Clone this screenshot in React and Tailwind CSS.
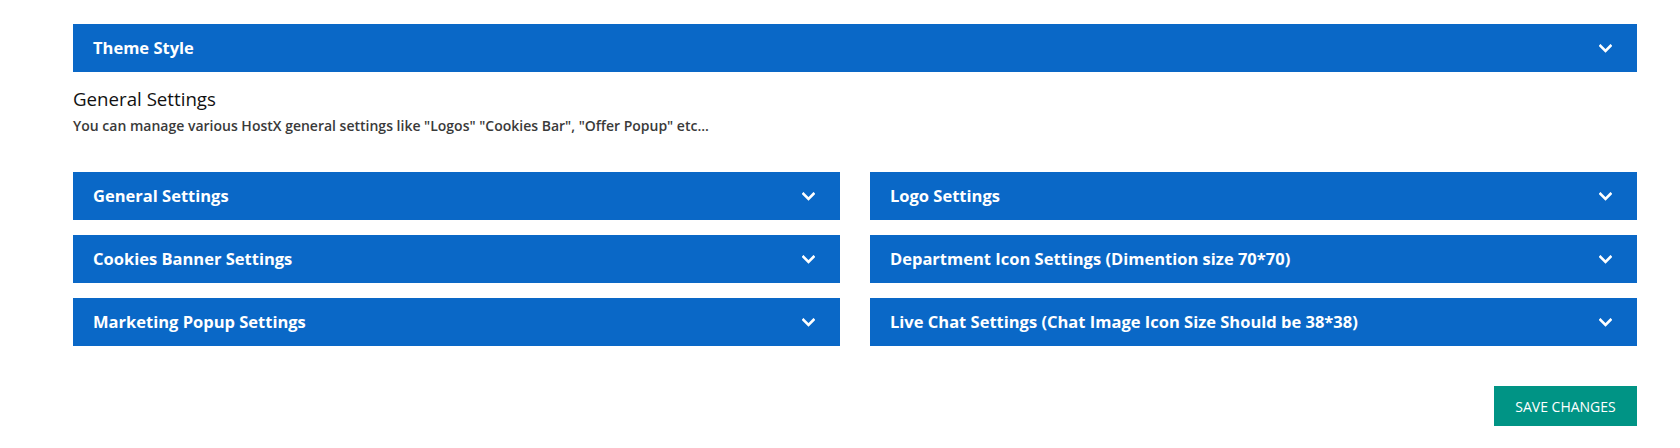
import React from "react";

const Chevron = () => (
  <svg width="13" height="9" viewBox="0 0 13 9" fill="none" className="shrink-0">
    <path d="M1.5 1.8 L6.5 6.8 L11.5 1.8" stroke="white" strokeWidth="2.6" strokeLinecap="square" strokeLinejoin="miter" />
  </svg>
);

const Bar = ({ title }) => (
  <div className="flex h-[48px] items-center justify-between bg-[#0a68c7] pl-[20px] pr-[25px] text-white">
    <span className="text-[16.5px] font-bold">{title}</span>
    <Chevron />
  </div>
);

export default function App() {
  const left = ["General Settings", "Cookies Banner Settings", "Marketing Popup Settings"];
  const right = [
    "Logo Settings",
    "Department Icon Settings (Dimention size 70*70)",
    "Live Chat Settings (Chat Image Icon Size Should be 38*38)",
  ];
  return (
    <div
      className="w-[1680px] h-[448px] bg-white pl-[73px] pr-[43px] pt-[24px]"
      style={{ fontFamily: '"Open Sans", "Noto Sans", sans-serif' }}
    >
      <Bar title="Theme Style" />
      <div className="mt-[15px]">
        <h2 className="text-[18.7px] leading-[24px] font-medium text-[#111]">General Settings</h2>
        <p className="mt-[5px] text-[14px] leading-[19px] font-semibold text-[#3a3a3a]">
          You can manage various HostX general settings like "Logos" "Cookies Bar", "Offer Popup" etc...
        </p>
      </div>
      <div className="mt-[37px] grid grid-cols-2 gap-x-[30px] gap-y-[15px]">
        {[0, 1, 2].map((i) => (
          <React.Fragment key={i}>
            <Bar title={left[i]} />
            <Bar title={right[i]} />
          </React.Fragment>
        ))}
      </div>
      <div className="mt-[40px] flex justify-end">
        <button className="h-[40px] w-[143px] bg-[#009485] text-[14px] text-white">SAVE CHANGES</button>
      </div>
    </div>
  );
}
